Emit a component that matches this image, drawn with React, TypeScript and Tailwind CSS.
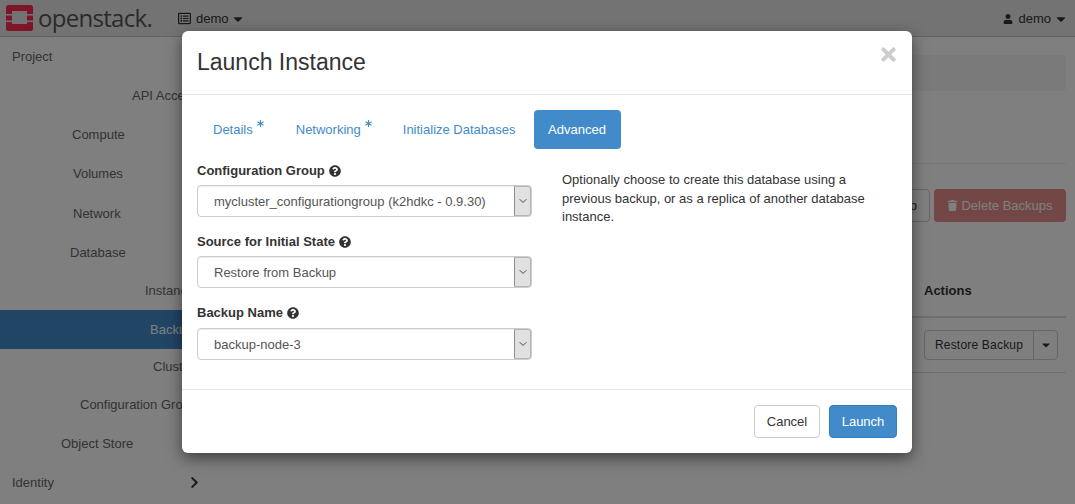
import { ChevronDown } from "lucide-react";
import { FaAsterisk, FaCaretDown, FaChevronRight, FaQuestionCircle, FaRegListAlt, FaTimes, FaTrash, FaUser } from "react-icons/fa";

const navItems = [
    { label: "Project", row: "h-[39px] pl-[12px]" },
    { label: "API Access", row: "h-[39px] pl-[132px]" },
    { label: "Compute", row: "h-[39px] pl-[72px]" },
    { label: "Volumes", row: "h-[40px] pl-[73px]" },
    { label: "Network", row: "h-[39px] pl-[73px]" },
    { label: "Database", row: "h-[39px] pl-[70px]" },
    { label: "Instances", row: "h-[38px] pl-[145px]" },
    { label: "Backups", row: "h-[39px] pl-[150px] bg-[#428bca] text-white" },
    { label: "Clusters", row: "h-[36px] pl-[153px]" },
    { label: "Configuration Groups", row: "h-[39px] pl-[80px]" },
    { label: "Object Store", row: "h-[39px] pl-[61px]" },
];

function SelectBox({ value }: { value: string }) {
    return (
        <div className="flex h-[32px] w-[335px] rounded-[4px] border border-[#ccc] bg-white shadow-[inset_0_1px_1px_rgba(0,0,0,0.075)]">
            <div className="flex-1 pl-[16px] text-[13px] leading-[32px] text-[#555]">{value}</div>
            <div className="flex w-[17px] items-center justify-center rounded-r-[3px] border border-y-[#b5b5b5] border-l-[#8f8f8f] border-r-[#b5b5b5] bg-[#e1e1e1]">
                <ChevronDown size={12} strokeWidth={1.8} className="text-[#333]" />
            </div>
        </div>
    );
}

function FieldLabel({ text }: { text: string }) {
    return (
        <div className="flex h-[20px] items-center gap-[4px] pt-[2px] text-[13px] font-bold text-[#333]">
            {text}
            <FaQuestionCircle size={12} />
        </div>
    );
}

export default function App() {
    return (
        <div className="relative h-[504px] w-[1075px] overflow-hidden bg-white font-['Liberation_Sans',sans-serif] text-[13px] text-[#333]">
            <header className="flex h-[37px] items-center border-b border-[#c4c4c4] bg-[#e7e7e7]">
                <svg width="27" height="26" viewBox="0 0 27 26" className="ml-[6px]">
                    <rect width="27" height="26" rx="2.5" fill="#fa2850" />
                    <rect x="6" y="6" width="15" height="13" fill="#e7e7e7" />
                    <rect x="0" y="9" width="6" height="1.6" fill="#e7e7e7" />
                    <rect x="0" y="15.5" width="6" height="1.6" fill="#e7e7e7" />
                    <rect x="21" y="9" width="6" height="1.6" fill="#e7e7e7" />
                    <rect x="21" y="15.5" width="6" height="1.6" fill="#e7e7e7" />
                </svg>
                <span className="ml-[5px] w-[114px] font-['Open_Sans',sans-serif] text-[24px] font-medium leading-[30px] tracking-[-0.7px] text-[#555]">openstack.</span>
                <div className="ml-[26px] flex items-center pt-[1px] text-[#333]">
                    <FaRegListAlt size={13} />
                    <span className="ml-[5px]">demo</span>
                    <FaCaretDown size={14} className="ml-[2px]" />
                </div>
                <div className="ml-auto mr-[7px] flex items-center pt-[1px]">
                    <FaUser size={10} />
                    <span className="ml-[5px]">demo</span>
                    <FaCaretDown size={14} className="ml-[3px]" />
                </div>
            </header>

            <div className="flex">
                <nav className="w-[205px] shrink-0 text-[#666]">
                    {navItems.map(item => (
                        <div key={item.label} className={`flex items-center whitespace-nowrap ${item.row}`}>
                            {item.label}
                        </div>
                    ))}
                    <div className="flex h-[39px] items-center justify-between pl-[12px] pr-[4px]">
                        Identity
                        <FaChevronRight size={13} className="text-[#333]" />
                    </div>
                </nav>

                <main className="flex-1 pr-[9px]">
                    <div className="mt-[18px] h-[36px] rounded-[4px] bg-[#f5f5f5]" />
                    <div className="mt-[72px] border-t border-[#eee]" />
                    <div className="mt-[25px] flex justify-end gap-[4px]">
                        <button className="h-[33px] whitespace-nowrap rounded-[4px] border border-[#ccc] bg-white px-[12px]">Create Backup</button>
                        <button className="flex h-[33px] w-[132px] items-center justify-center gap-[3px] rounded-[4px] bg-[#d9534f] text-white opacity-65">
                            <FaTrash size={11} />
                            Delete Backups
                        </button>
                    </div>
                    <div className="mt-[59px] flex h-[37px] justify-end border-b-2 border-[#ddd]">
                        <div className="w-[142px] font-bold leading-[20px]">Actions</div>
                    </div>
                    <div className="flex h-[55px] items-center justify-end border-b border-[#ddd] pr-[8px]">
                        <div className="flex h-[30px] w-[134px] rounded-[4px] border border-[#ccc] bg-white">
                            <div className="flex-1 text-center text-[12px] leading-[29px] tracking-[0.2px]">Restore Backup</div>
                            <div className="flex w-[24px] items-center justify-center border-l border-[#ccc]">
                                <FaCaretDown size={12} />
                            </div>
                        </div>
                    </div>
                </main>
            </div>

            <div className="absolute inset-0 bg-black/50" />

            <div className="absolute left-[182px] top-[31px] h-[422px] w-[730px] rounded-[6px] bg-white shadow-[0_5px_15px_rgba(0,0,0,0.5)]">
                <div className="relative flex h-[64px] items-center border-b border-[#e5e5e5] pb-[1px] pl-[15px] text-[23px] text-[#333]">
                    Launch Instance
                    <FaTimes size={21} className="absolute right-[13px] top-[13px] text-[#ccc]" />
                </div>

                <div className="ml-[15px] mt-[15px] flex h-[39px] items-center text-[#428bca]">
                    <div className="flex pl-[16px]">
                        Details
                        <FaAsterisk size={7} className="ml-[4px]" />
                    </div>
                    <div className="ml-[32px] flex">
                        Networking
                        <FaAsterisk size={7} className="ml-[4px]" />
                    </div>
                    <div className="ml-[31px]">Initialize Databases</div>
                    <div className="ml-[18px] flex h-[39px] w-[87px] items-center justify-center rounded-[4px] bg-[#428bca] text-white">Advanced</div>
                </div>

                <div className="mt-[11px] flex h-[230px] border-b border-[#e5e5e5] pl-[15px]">
                    <div className="flex w-[335px] flex-col">
                        <FieldLabel text="Configuration Group" />
                        <div className="mt-[5px]"><SelectBox value="mycluster_configurationgroup (k2hdkc - 0.9.30)" /></div>
                        <div className="mt-[14px]"><FieldLabel text="Source for Initial State" /></div>
                        <div className="mt-[5px]"><SelectBox value="Restore from Backup" /></div>
                        <div className="mt-[14px]"><FieldLabel text="Backup Name" /></div>
                        <div className="mt-[6px]"><SelectBox value="backup-node-3" /></div>
                    </div>
                    <p className="ml-[30px] mt-[11px] w-[310px] text-[13px] leading-[18.5px] text-[#333]">
                        Optionally choose to create this database using a previous backup, or as a replica of another database instance.
                    </p>
                </div>

                <div className="mr-[15px] mt-[15px] flex justify-end gap-[9px]">
                    <button className="h-[33px] w-[66px] rounded-[4px] border border-[#ccc] bg-white">Cancel</button>
                    <button className="h-[33px] w-[68px] rounded-[4px] border border-[#357ebd] bg-[#428bca] text-white">Launch</button>
                </div>
            </div>
        </div>
    );
}
